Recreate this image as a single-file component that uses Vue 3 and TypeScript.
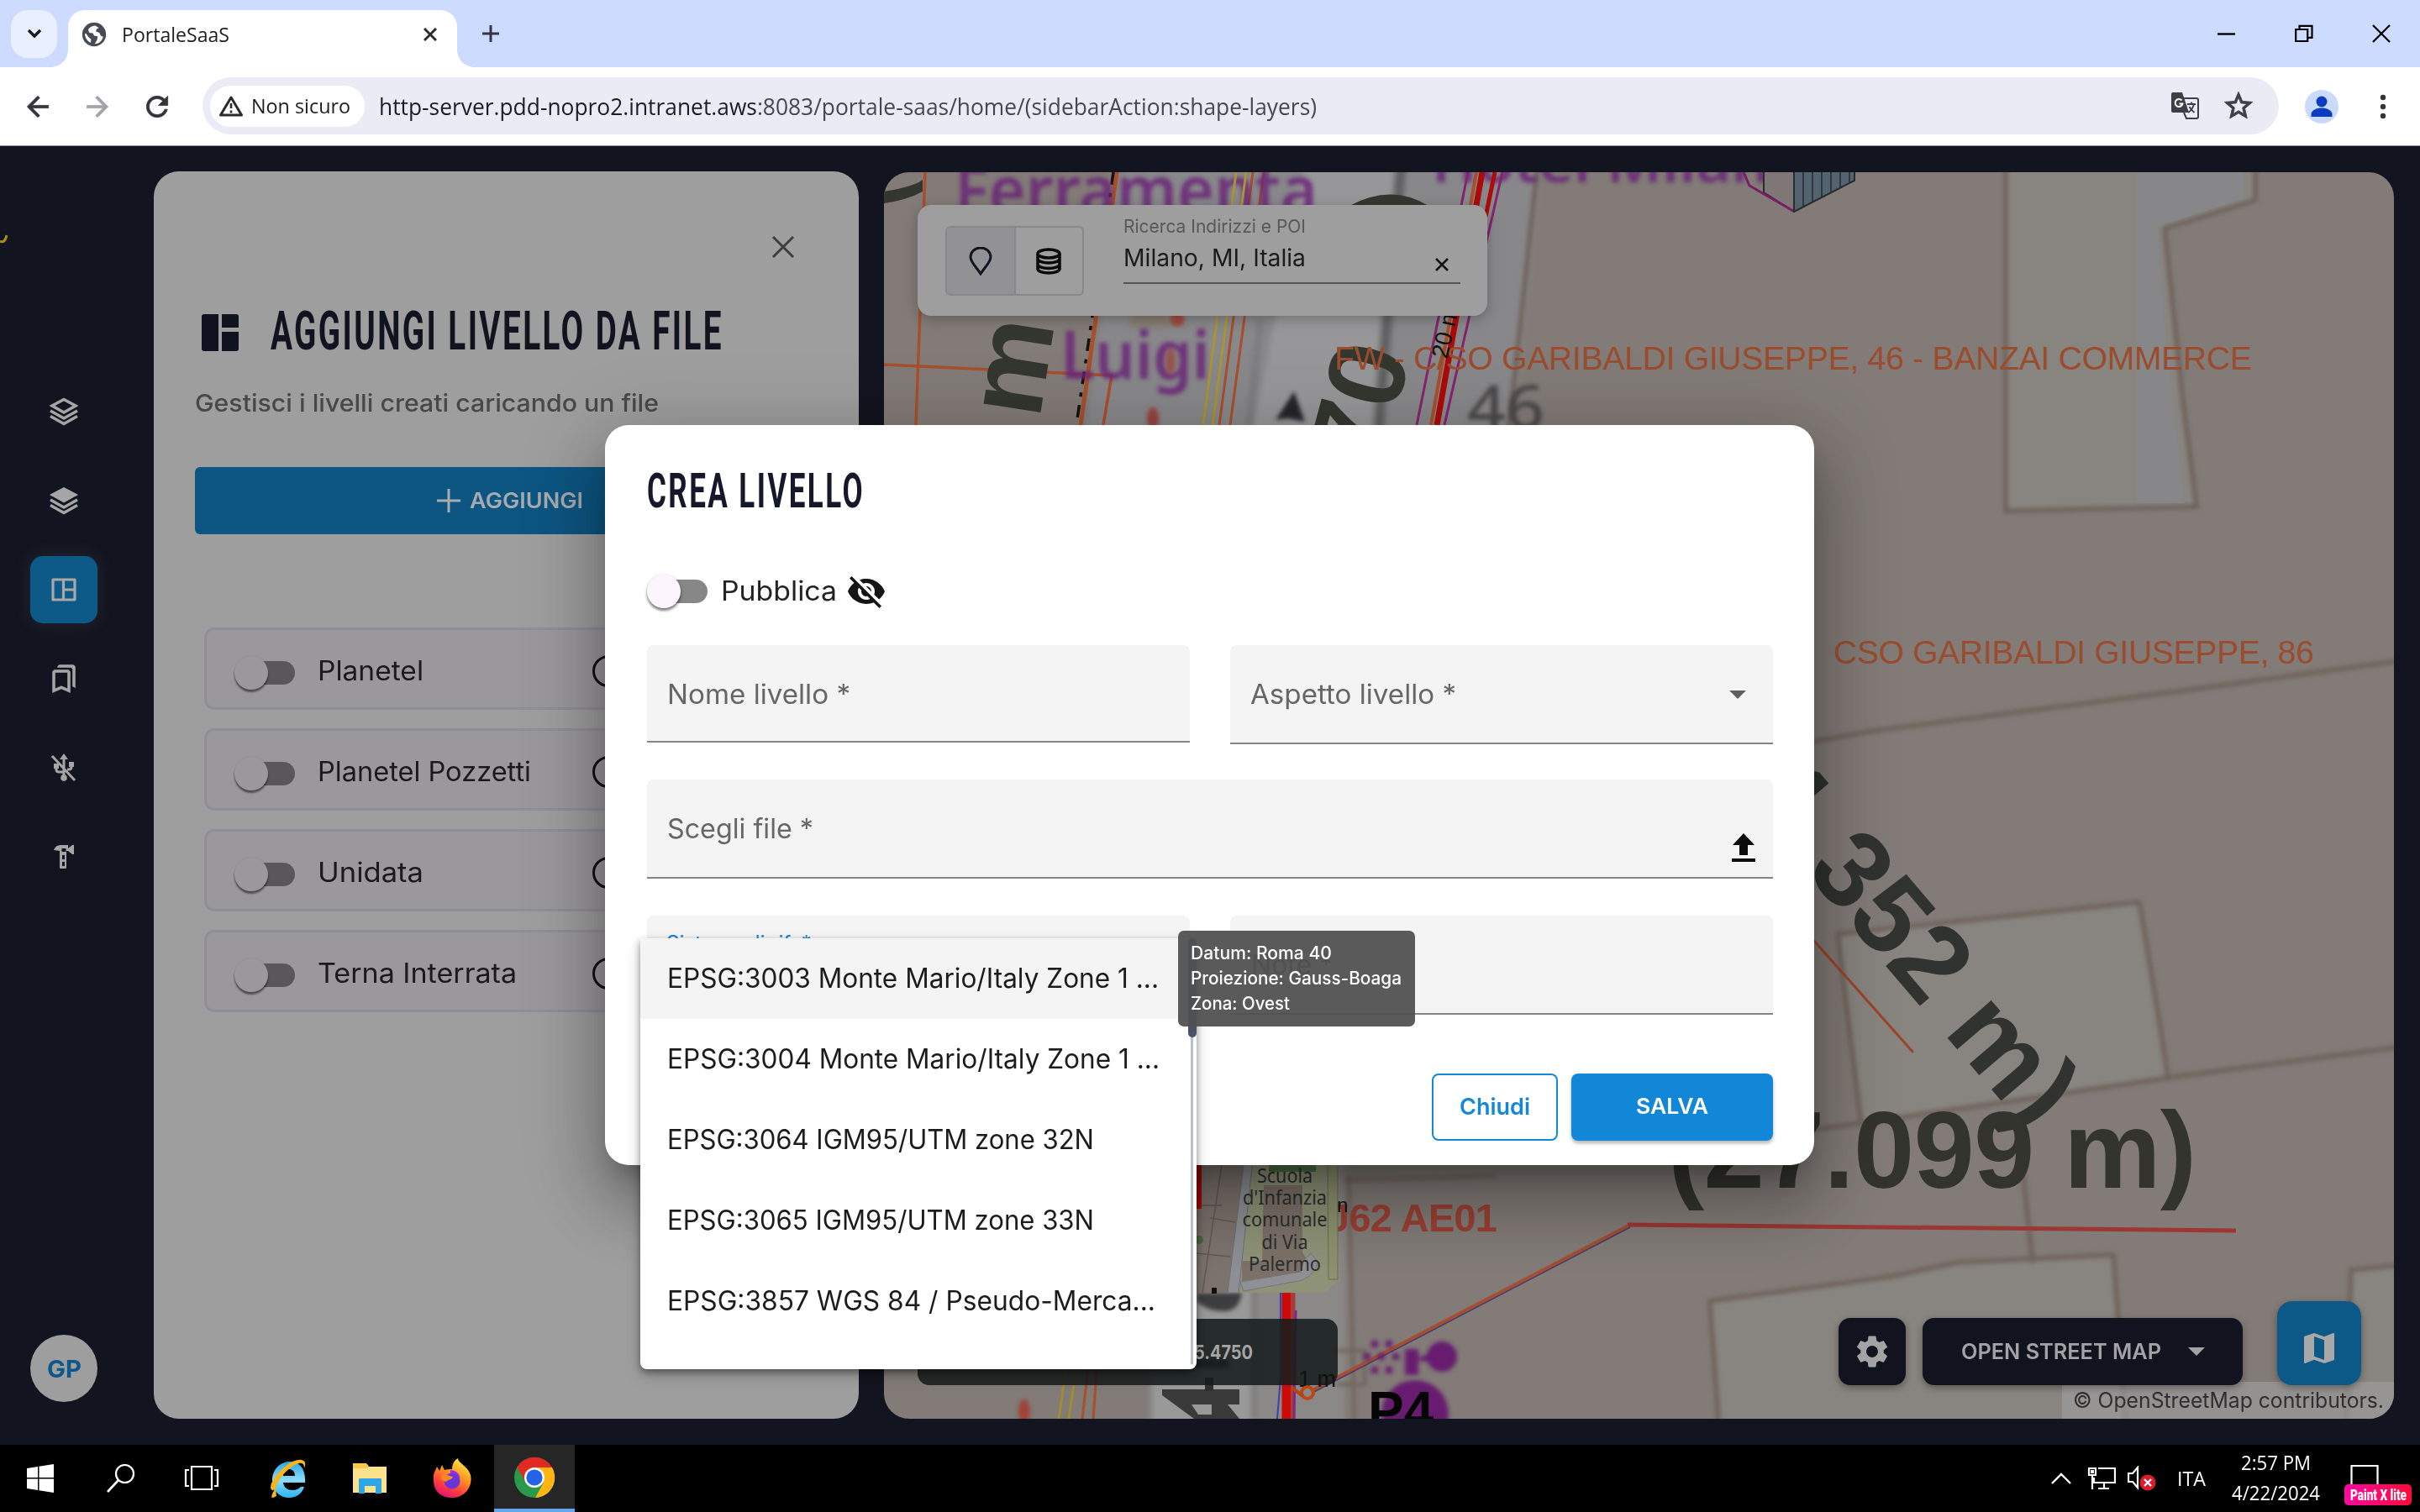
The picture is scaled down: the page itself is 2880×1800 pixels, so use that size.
<script setup lang="ts">
interface LayerRow {
  name: string
  width: number
}
interface EpsgOption {
  label: string
  width: number
}

const layers: LayerRow[] = [
  { name: 'Planetel', width: 126 },
  { name: 'Planetel Pozzetti', width: 254 },
  { name: 'Unidata', width: 126 },
  { name: 'Terna Interrata', width: 237 },
]

const options: EpsgOption[] = [
  { label: 'EPSG:3003 Monte Mario/Italy Zone 1 ...', width: 585 },
  { label: 'EPSG:3004 Monte Mario/Italy Zone 1 ...', width: 586 },
  { label: 'EPSG:3064 IGM95/UTM zone 32N', width: 508 },
  { label: 'EPSG:3065 IGM95/UTM zone 33N', width: 508 },
  { label: 'EPSG:3857 WGS 84 / Pseudo-Merca...', width: 581 },
]

// Stretches a line of text to an exact width while keeping its flow size in step.
const vFit = {
  mounted(el: HTMLElement, binding: { value: number }) {
    const natural = el.getBoundingClientRect().width
    if (!natural) return
    el.style.transform = `scaleX(${binding.value / natural})`
    el.style.marginRight = `${binding.value - natural}px`
  },
}
</script>

<template>
  <div class="screen">
    <!-- Tab strip -->
    <div class="tabs">
      <div class="tab-search">
        <svg width="18" height="12" viewBox="0 0 18 12"><path d="M2 2l7 7 7-7" fill="none" stroke="#1b1b1f" stroke-width="3.4" /></svg>
      </div>
      <div class="tab">
        <svg width="34" height="34" viewBox="0 0 24 24"><circle cx="12" cy="12" r="10" fill="#474b54" /><path fill="#fff" d="M13 4.500c-3 0-5 1.500-6 3.500l1 2.500 3 .5 1 2 3 .5-.5 3-2 3.500c4 0 6.500-3 7-6l-2-1-1-2.500-3-1 .5-2 2-1z M5 11l-.8 1c.3 3 2 5.500 4.800 7l.5-3-2-1.500z" /></svg>
        <span class="tab-title"><span v-fit="128" class="fit">PortaleSaaS</span></span>
        <svg class="tab-x" width="16" height="16" viewBox="0 0 16 16"><path d="M1 1l14 14M15 1L1 15" stroke="#2a2b30" stroke-width="3" /></svg>
      </div>
      <svg class="plus" width="22" height="22" viewBox="0 0 22 22"><path d="M11 1v20M1 11h20" stroke="#333740" stroke-width="3" /></svg>
      <div class="win">
        <svg width="22" height="22" viewBox="0 0 22 22"><path d="M0 11.5h21" stroke="#000" stroke-width="2.4" /></svg>
        <svg width="22" height="22" viewBox="0 0 22 22"><path d="M1.2 6h14v14h-14zM5.5 6V1.8h15v14h-5" fill="none" stroke="#000" stroke-width="2.2" /></svg>
        <svg width="22" height="22" viewBox="0 0 22 22"><path d="M1 1l20 20M21 1L1 21" stroke="#000" stroke-width="2.2" /></svg>
      </div>
    </div>

    <!-- Address bar -->
    <div class="toolbar">
      <div class="nav">
        <svg width="38" height="38" viewBox="0 0 24 24"><path fill="#33353b" stroke="#33353b" stroke-width=".5" d="M20 11H7.83l5.59-5.59L12 4l-8 8 8 8 1.41-1.41L7.83 13H20v-2z" /></svg>
        <svg width="38" height="38" viewBox="0 0 24 24"><path fill="#a3a4a8" stroke="#a3a4a8" stroke-width=".5" d="M12 4l-1.41 1.41L16.17 11H4v2h12.17l-5.58 5.59L12 20l8-8z" /></svg>
        <svg width="38" height="38" viewBox="0 0 24 24"><path fill="#33353b" stroke="#33353b" stroke-width=".5" d="M17.65 6.35C16.2 4.9 14.21 4 12 4c-4.42 0-7.99 3.58-7.99 8s3.57 8 7.99 8c3.73 0 6.84-2.55 7.73-6h-2.08c-.82 2.33-3.04 4-5.65 4-3.31 0-6-2.69-6-6s2.69-6 6-6c1.66 0 3.14.69 4.22 1.78L13 11h7V4l-2.35 2.35z" /></svg>
      </div>
      <div class="omnibox">
        <div class="chip">
          <svg width="30" height="26" viewBox="0 0 30 26"><path d="M15 3L2.5 24h25z" fill="none" stroke="#2a2b30" stroke-width="3" stroke-linejoin="round" /><path d="M15 10v6M15 18.5v3" stroke="#2a2b30" stroke-width="2.6" /></svg>
          <span v-fit="118" class="fit">Non sicuro</span>
        </div>
        <span class="url"><span v-fit="1116" class="fit"><b>http-server.pdd-nopro2.intranet.aws</b>:8083/portale-saas/home/(sidebarAction:shape-layers)</span></span>
        <svg class="translate" width="34" height="34" viewBox="0 0 34 34">
          <path d="M3 1h11l8 24H3q-2 0-2-2V3q0-2 2-2z" fill="#3c3f46" />
          <path d="M15 8h16q2 0 2 2v20q0 2-2 2H19l-3-7" fill="none" stroke="#3c3f46" stroke-width="2" />
          <path d="M13.500 10.500a4.500 4.500 0 1 0 1 4h-4" fill="none" stroke="#fff" stroke-width="2" />
          <path d="M20 15h10M25 12.500V15M28 15q-2 7-7 10M22.500 18q2 4 6 7" fill="none" stroke="#3c3f46" stroke-width="1.800" />
        </svg>
        <svg width="40" height="40" viewBox="0 0 24 24"><path fill="#3c3f46" stroke="#3c3f46" stroke-width=".5" d="M22 9.24l-7.19-.62L12 2 9.19 8.63 2 9.24l5.46 4.73L5.82 21 12 17.27 18.18 21l-1.63-7.03L22 9.24zM12 15.4l-3.76 2.27 1-4.28-3.32-2.88 4.38-.38L12 6.1l1.71 4.04 4.38.38-3.32 2.88 1 4.28L12 15.4z" /></svg>
      </div>
      <svg class="profile" width="40" height="40" viewBox="0 0 40 40"><circle cx="20" cy="20" r="20" fill="#c9dafd" /><circle cx="20" cy="14" r="6.500" fill="#0b3bbf" /><path d="M7.500 32v-3c0-5 7-7.500 12.500-7.500S32.500 24 32.500 29v3z" fill="#0b3bbf" /></svg>
      <svg class="dots" width="8" height="30" viewBox="0 0 8 30"><circle cx="4" cy="4" r="3.200" fill="#33353b" /><circle cx="4" cy="15" r="3.200" fill="#33353b" /><circle cx="4" cy="26" r="3.200" fill="#33353b" /></svg>
    </div>

    <!-- Application -->
    <div class="app">
      <aside class="rail">
        <svg class="scrap" width="9" height="12" viewBox="0 0 9 12"><path d="M0 8q6 3 8-7" fill="none" stroke="#b08d12" stroke-width="3" /></svg>
        <div class="rail-item"><svg width="36" height="34" viewBox="0 0 36 34"><path d="M18 2.500L32 10 18 18 4 10z" fill="none" stroke="#a5a5a5" stroke-width="3.500" /><path d="M2 16l16 9 16-9M2 22.500l16 9 16-9" fill="none" stroke="#a5a5a5" stroke-width="3.400" /></svg></div>
        <div class="rail-item"><svg width="36" height="34" viewBox="0 0 36 34"><path d="M18 1L35 10 18 19.500 1 10z" fill="#a5a5a5" /><path d="M2 16l16 9 16-9M2 22.500l16 9 16-9" fill="none" stroke="#a5a5a5" stroke-width="3.400" /></svg></div>
        <div class="rail-item active"><svg width="30" height="28" viewBox="0 0 30 28"><path d="M2 2h26v24H2zM14.500 2v24M14.500 14H28" fill="none" stroke="#a8a8a8" stroke-width="3.200" stroke-linejoin="round" /></svg></div>
        <div class="rail-item"><svg width="36" height="36" viewBox="0 0 24 24"><path fill="#a5a5a5" stroke="#a5a5a5" stroke-width=".4" d="M15 7v12.970l-4.210-1.810-.79-.34-.79.34L5 19.970V7h10m4-6H8.990C7.890 1 7 1.900 7 3h10c1.100 0 2 .9 2 2v13l2 1V3c0-1.100-.9-2-2-2zm-4 4H5c-1.100 0-2 .9-2 2v16l7-3 7 3V7c0-1.100-.9-2-2-2z" /></svg></div>
        <div class="rail-item"><svg width="32" height="34" viewBox="0 0 32 34"><g fill="none" stroke="#a5a5a5" stroke-width="3"><path d="M2 3l27 29M16 5v23M7 14v5q0 3 3 3h6M25 10v6q0 3-3 3h-2" /></g><path d="M16 0l5 7H11zM4 12h6v6H4zM22 10h6v6h-6z" fill="#a5a5a5" /><circle cx="16" cy="29" r="3.800" fill="#a5a5a5" /></svg></div>
        <div class="rail-item"><svg width="26" height="32" viewBox="0 0 26 32"><path d="M1 8q2-6 8-6h9v4l5-4h2v11h-2l-5-4h-2v20q0 1-1 1H9q-1 0-1-1V9z" fill="#a5a5a5" /><path d="M10.500 6h5v4h-5zM11 14h3v5h-3zM11 22h3v5h-3z" fill="#12151f" /></svg></div>
        <div class="avatar"><span v-fit="41" class="fit">GP</span></div>
      </aside>

      <section class="panel">
        <div class="panel-close"><svg width="28" height="28" viewBox="0 0 28 28"><path d="M2 2l24 24M26 2L2 26" stroke="#3d3d3f" stroke-width="3" /></svg></div>
        <div class="panel-head">
          <svg width="46" height="46" viewBox="0 0 46 46"><path d="M4 1h17v44H4q-3 0-3-3V4q0-3 3-3zM25 1h17q3 0 3 3v13H25zM25 22h20v20q0 3-3 3H25z" fill="#10131f" /></svg>
          <h1><span v-fit="539" class="fit">AGGIUNGI LIVELLO DA FILE</span></h1>
        </div>
        <p class="sub"><span v-fit="552" class="fit">Gestisci i livelli creati caricando un file</span></p>
        <div class="add">
          <svg width="28" height="28" viewBox="0 0 28 28"><path d="M14 0v28M0 14h28" stroke="#a8adb1" stroke-width="3" /></svg>
          <span v-fit="135" class="fit">AGGIUNGI</span>
        </div>
        <div class="cards">
          <div v-for="l in layers" :key="l.name" class="card">
            <span class="toggle dim"><i></i></span>
            <span class="card-name"><span v-fit="l.width" class="fit">{{ l.name }}</span></span>
            <span class="ring"></span>
          </div>
        </div>
      </section>

      <section class="map">
        <svg class="map-canvas" width="1797" height="1484" viewBox="1052 205 1797 1484">
          <defs>
            <filter id="soft" x="-20%" y="-20%" width="140%" height="140%"><feGaussianBlur stdDeviation="3.500" /></filter>
            <filter id="soft2" x="-20%" y="-20%" width="140%" height="140%"><feGaussianBlur stdDeviation="2.600" /></filter>
            <pattern id="hatch" width="11" height="20" patternUnits="userSpaceOnUse"><path d="M0 0v20" stroke="#1f2326" stroke-width="4" /></pattern>
          </defs>
          <rect x="1052" y="205" width="1797" height="1484" fill="#827b77" />
          <g filter="url(#soft)">
            <path d="M1335 190L1290 520H1800L1835 190z" fill="#88878a" />
            <path d="M1555 190L1490 520H1640L1668 190z" fill="#979799" />
            <path d="M1668 190L1658 300Q1650 380 1640 520" stroke="#5e5e5e" stroke-width="13" fill="none" />
            <path d="M1345 370h45v20h-45z" fill="#857b70" />
            <path d="M1500 380L1485 520" stroke="#777" stroke-width="6" fill="none" />
            <path d="M1370 1380V1700H1600V1380z" fill="#8b8888" />
            <path d="M1370 1380V1700H1490V1380z" fill="#999" />
            <path d="M1492 1530v160" stroke="#777" stroke-width="6" />
          </g>
          <g filter="url(#soft2)" fill="#88847f" stroke="#6f635c" stroke-width="6">
            <path d="M2387 195V608L2614 603 2598 480 2576 272 2684 238V195z" />
            <path d="M2187 1112L2330 1097 2546 1074 2567 1200 2580 1283 2215 1337z" />
            <path d="M2035 1549L2250 1520 2330 1503 2515 1494 2530 1700H2046z" />
            <path d="M2860 1506L2798 1512 2792 1700H2860z" />
            <path d="M1830 195L1795 520" fill="none" />
            <path d="M2150 884L2230 870 2600 822 2860 786" fill="none" />
            <path d="M2580 1283L2860 1246" fill="none" />
            <path d="M2215 1337L2150 1346" fill="none" />
            <path d="M2406 1380L2419 1504" fill="none" />
            <path d="M1605 1400L1612 1700M1600 1405L1780 1400" fill="none" stroke-width="4" />
            <path d="M1590 1608h34v40h-34" fill="none" stroke-width="4" />
          </g>
          <path d="M2543 205h127v32l-102 32 8 120 24 210h-57z" fill="#87888b" opacity=".7" />

          <g fill="none" stroke="#a84f2c" stroke-width="3">
            <path d="M1101 205L1090 506M1052 434L1323 447 1313 506" stroke-width="3.500" />
            <path d="M1329 205L1286 506" stroke-width="5" />
            <path d="M1491 205L1451 506M1504 205L1464 506" />
            <path d="M1757 205L1703 506" stroke-width="4" />
          </g>
          <path d="M1325 205L1281 506" stroke="#15120f" stroke-width="3.500" stroke-dasharray="15 10 5 10" fill="none" />

          <g class="osm" filter="url(#soft2)" fill="#6a2878" opacity=".85">
            <text x="1136" y="255" font-size="80" font-weight="600" textLength="432" lengthAdjust="spacingAndGlyphs">Ferramenta</text>
            <text x="1262" y="451" font-size="80" font-weight="600" textLength="178" lengthAdjust="spacingAndGlyphs">Luigi</text>
            <text x="1704" y="217" font-size="66" font-weight="600" textLength="446" lengthAdjust="spacingAndGlyphs">Hotel Milano</text>
          </g>
          <path d="M1471 205L1432 506M1483 205L1443 506" stroke="#a89433" stroke-width="3" fill="none" />
          <path d="M1747 205L1686 506M1788 205L1719 506" stroke="#84246f" stroke-width="3" fill="none" />
          <path d="M1764 205L1710 506" stroke="#ad0a0a" stroke-width="7" fill="none" />
          <path d="M1779 205L1768 258" stroke="#ad0a0a" stroke-width="5" fill="none" />
          <g filter="url(#soft2)">
            <circle cx="1401" cy="380" r="9" fill="#9b4a3f" /><ellipse cx="1393" cy="430" rx="6" ry="16" fill="#95524d" /><ellipse cx="1372" cy="498" rx="7" ry="13" fill="#95433d" />
            <path d="M1540 466L1553 502 1532 498 1518 500z" fill="#26272a" />
            <text x="1746" y="511" class="osm" font-size="72" font-weight="500" fill="#4b4a4a" textLength="92" lengthAdjust="spacingAndGlyphs">46</text>
          </g>
          <g class="arial" font-weight="700" fill="#34372f">
            <text transform="translate(1237 500) rotate(-81)" font-size="130">m</text>
            <text transform="translate(1642 562) rotate(-75)" font-size="130">70</text>
            <path d="M1052 228Q1088 222 1098 214V228Q1080 238 1052 242z" />
            <path d="M1606 245Q1656 218 1700 245z" />
          </g>
          <g class="arial" fill="#9a4d2e" font-size="39">
            <text x="1588" y="440" textLength="1092">FW - C/SO GARIBALDI GIUSEPPE, 46 - BANZAI COMMERCE</text>
            <text x="2182" y="790" textLength="572">CSO GARIBALDI GIUSEPPE, 86</text>
          </g>
          <text transform="translate(1722 428) rotate(-77)" class="arial" font-size="28" fill="#111">20 m</text>

          <path d="M2099 205v22l36 25 36-20V205z" fill="#7f7776" />
          <path d="M2135 205h72v10l-72 37z" fill="#536370" />
          <path d="M2135 205h72v10l-72 37z" fill="url(#hatch)" opacity=".65" />
          <path d="M2099 205v24l36 23 72-37v-10M2135 205v47" stroke="#2a2b2b" stroke-width="2" fill="none" />
          <path d="M2075 205l7 16 52 30" stroke="#7a1f63" stroke-width="3" fill="none" />

          <path d="M2150 1110L2277 1253" stroke="#9c4528" stroke-width="3" />
          <text transform="translate(2077 954) rotate(49.5)" class="arial" font-size="130" font-weight="700" fill="#30332f">1.352 m)</text>
          <text x="1985" y="1414" class="arial" font-size="130" font-weight="700" fill="#34342e" textLength="629">(27.099 m)</text>
          <path d="M1937 1458L2661 1465" stroke="#9c3733" stroke-width="5" />
          <path d="M1560 1656L1938 1459" stroke="#a34f30" stroke-width="4" />
          <path d="M1562 1658L1940 1461" stroke="#4b3a6e" stroke-width="1.500" />
          <text x="1580" y="1466" class="arial" font-size="47" font-weight="700" fill="#9a4034" textLength="202">J62 AE01</text>

          <g fill="none">
            <path d="M1270 1620L1260 1689M1282 1620L1272 1689" stroke="#a08c31" stroke-width="3" />
            <path d="M1296 1620L1288 1689M1306 1620L1301 1689" stroke="#a84f2c" stroke-width="3" />
            <path d="M1524 1530V1640L1520 1689" stroke="#3b3faf" stroke-width="2" />
            <path d="M1531 1530V1689" stroke="#cc0a08" stroke-width="11" />
            <path d="M1539 1530V1689" stroke="#a83c3c" stroke-width="5" />
            <path d="M1542 1560L1540 1689" stroke="#7a2a86" stroke-width="3" />
          </g>
          <g filter="url(#soft2)">
            <ellipse cx="1219" cy="1680" rx="7" ry="14" fill="#a04238" />
            <path d="M1424 1539h54q-3 22-22 22-20 0-32-12z" fill="#3d3d3f" />
            <path d="M1418 1618h44v10h-44z" fill="#2c2c2e" />
          </g>
          <path d="M1383 1654h92v18h-14l14 17h-54l-38-28z" fill="#3a3a3a" />
          <path d="M1418 1672h24v12h-16z" fill="#999" />
          <path d="M1434 1640h10v16h-10z" fill="#2f2f31" />
          <g filter="url(#soft2)" fill="#681a70">
            <path d="M1672 1606h16v10l10-3h8v8h-8l-10-2v18h-16z" /><circle cx="1716" cy="1615" r="18" /><circle cx="1684" cy="1683" r="40" />
            <circle cx="1636" cy="1600" r="4.500" /><circle cx="1653" cy="1600" r="4.500" /><circle cx="1627" cy="1615" r="4.500" /><circle cx="1644" cy="1615" r="4.500" /><circle cx="1661" cy="1615" r="4.500" /><circle cx="1636" cy="1631" r="4.500" /><circle cx="1653" cy="1631" r="4.500" />
          </g>
          <text x="1628" y="1702" class="arial" font-size="64" font-weight="700" fill="#050505">P4</text>

          <!-- Overview inset -->
          <path d="M1300 1350h292v174l-12 12q-3 3-8 3H1300z" fill="#8e9277" />
          <path d="M1400 1380h84l-22 159h-62z" fill="#7c736e" />
          <path d="M1455 1380L1431 1539M1424 1435h30M1424 1492l40 4M1440 1450l30 5" stroke="#615a55" stroke-width="1.500" fill="none" />
          <path d="M1481 1380h10l-17 159h-13z" fill="#8d8f94" stroke="#6e7076" />
          <path d="M1504 1411h46v80l14 22-86 12v-24h24z" fill="#7c7169" />
          <path d="M1580 1385h12v138h-11z" fill="#8c926e" stroke="#6b7050" />
          <path d="M1480 1537l70-13q16-8 18-22l-8-10-8 8-4 14-72 12z" fill="#8f9096" stroke="#75757a" />
          <path d="M1424 1387h6v52h-6z" fill="#ad0a0a" />
          <path d="M1510 1387h56v8h-56z" fill="#4e6f42" />
          <circle cx="1427" cy="1476" r="5" fill="#4c6b43" />
          <rect x="1442" y="1533" width="6" height="7" fill="#111" />
          <g class="noto" font-size="23" fill="#2d2f2d" text-anchor="middle">
            <text x="1529" y="1408" textLength="66" lengthAdjust="spacingAndGlyphs">Scuola</text>
            <text x="1529" y="1434" textLength="100" lengthAdjust="spacingAndGlyphs">d'Infanzia</text>
            <text x="1529" y="1460" textLength="101" lengthAdjust="spacingAndGlyphs">comunale</text>
            <text x="1529" y="1487" textLength="55" lengthAdjust="spacingAndGlyphs">di Via</text>
            <text x="1529" y="1513" textLength="86" lengthAdjust="spacingAndGlyphs">Palermo</text>
          </g>
          <text x="1591" y="1443" class="arial" font-size="24" fill="#111">n</text>
          <rect x="1092" y="1570" width="500" height="79" rx="14" fill="#161b1c" opacity=".87" />
          <text x="1421" y="1618" class="inter" font-size="23" font-weight="700" fill="#a5a5a5" textLength="70" lengthAdjust="spacingAndGlyphs">5.4750</text>
          <text x="1545" y="1651" class="arial" font-size="27" fill="#111">1 m</text>
          <circle cx="1556" cy="1658" r="7" fill="none" stroke="#bd4812" stroke-width="4" />
          <path d="M1537 1652l14 10" stroke="#b34218" stroke-width="4" />
        </svg>

        <div class="search">
          <div class="modes">
            <span class="on"><svg width="28" height="34" viewBox="0 0 28 34"><path d="M14 32C9 24 2 18 2 12a12 11 0 0 1 24 0c0 6-7 12-12 20z" fill="none" stroke="#12151f" stroke-width="3" /></svg></span>
            <span><svg width="32" height="32" viewBox="0 0 32 32"><g fill="none" stroke="#0a0a0a" stroke-width="3.600"><ellipse cx="16" cy="7" rx="13" ry="5" /><path d="M3 7v18c0 3 6 5 13 5s13-2 13-5V7M3 13c0 3 6 5 13 5s13-2 13-5M3 19.500c0 3 6 5 13 5s13-2 13-5" /></g></svg></span>
          </div>
          <div class="query">
            <span class="query-label"><span v-fit="217" class="fit">Ricerca Indirizzi e POI</span></span>
            <span class="query-value"><span v-fit="217" class="fit">Milano, MI, Italia</span>
              <svg width="16" height="16" viewBox="0 0 16 16"><path d="M1 1l14 14M15 1L1 15" stroke="#151515" stroke-width="2.500" /></svg></span>
          </div>
        </div>

        <div class="attribution"><span v-fit="370" class="fit">© OpenStreetMap contributors.</span></div>
        <div class="map-tools">
          <div class="gear"><svg width="46" height="46" viewBox="0 0 24 24"><path fill="#a3a3a5" d="M19.140 12.940c.04-.3.06-.61.06-.94 0-.32-.02-.64-.07-.94l2.030-1.580c.18-.14.23-.41.12-.61l-1.920-3.320c-.12-.22-.37-.29-.59-.22l-2.390.96c-.5-.38-1.030-.7-1.620-.94l-.36-2.540c-.04-.24-.24-.41-.48-.41h-3.840c-.24 0-.43.17-.47.41l-.36 2.540c-.59.24-1.130.57-1.620.94l-2.390-.96c-.22-.08-.47 0-.59.22L2.740 8.870c-.12.21-.08.47.12.61l2.030 1.580c-.05.3-.09.63-.09.94s.02.64.07.94l-2.030 1.580c-.18.14-.23.41-.12.61l1.920 3.320c.12.22.37.29.59.22l2.390-.96c.5.38 1.030.7 1.620.94l.36 2.540c.05.24.24.41.48.41h3.840c.24 0 .44-.17.47-.41l.36-2.540c.59-.24 1.130-.56 1.620-.94l2.390.96c.22.08.47 0 .59-.22l1.920-3.320c.12-.22.07-.47-.12-.61l-2.010-1.580zM12 15.600c-1.980 0-3.600-1.620-3.600-3.600s1.620-3.600 3.600-3.600 3.600 1.620 3.600 3.600-1.620 3.600-3.600 3.600z" /></svg></div>
          <div class="basemap"><span v-fit="238" class="fit">OPEN STREET MAP</span><svg width="20" height="10" viewBox="0 0 20 10"><path d="M0 0h20L10 10z" fill="#a3a3a5" /></svg></div>
          <div class="map-btn"><svg width="48" height="48" viewBox="0 0 24 24"><path fill="#a8a8a8" d="M20.500 3l-.16.03L15 5.100 9 3 3.360 4.900c-.21.07-.36.25-.36.48V20.500c0 .28.22.5.5.5l.16-.03L9 18.900l6 2.100 5.640-1.900c.21-.07.36-.25.36-.48V3.500c0-.28-.22-.5-.5-.5zM15 19l-6-2.110V5l6 2.110V19z" /></svg></div>
        </div>
      </section>

      <!-- Dialog -->
      <div class="dialog">
        <h2><span v-fit="259" class="fit">CREA LIVELLO</span></h2>
        <div class="publish">
          <span class="toggle"><i></i></span>
          <span class="publish-label"><span v-fit="138" class="fit">Pubblica</span></span>
          <svg width="48" height="48" viewBox="0 0 24 24"><path fill="#151515" d="M12 7c2.760 0 5 2.240 5 5 0 .65-.13 1.260-.36 1.830l2.920 2.920c1.510-1.260 2.700-2.890 3.430-4.750-1.730-4.390-6-7.500-11-7.500-1.400 0-2.740.25-3.980.7l2.160 2.160C10.740 7.130 11.350 7 12 7zM2 4.270l2.280 2.280.46.46C3.080 8.300 1.780 10.020 1 12c1.730 4.390 6 7.500 11 7.500 1.550 0 3.030-.3 4.380-.84l.42.42L19.730 22 21 20.730 3.270 3 2 4.270zM7.530 9.800l1.550 1.550c-.05.21-.08.43-.08.65 0 1.660 1.340 3 3 3 .22 0 .44-.03.65-.08l1.550 1.550c-.67.33-1.410.53-2.200.53-2.760 0-5-2.240-5-5 0-.79.2-1.530.53-2.200zm4.310-.78l3.150 3.150.02-.16c0-1.660-1.340-3-3-3l-.17.01z" /></svg>
        </div>
        <div class="row">
          <div class="field short"><span v-fit="218" class="fit">Nome livello *</span></div>
          <div class="field"><span v-fit="245" class="fit">Aspetto livello *</span><svg class="caret" width="20" height="10" viewBox="0 0 20 10"><path d="M0 0h20L10 10z" fill="#5f5f5f" /></svg></div>
        </div>
        <div class="row file">
          <div class="field"><span v-fit="174" class="fit">Scegli file *</span><svg class="upload" width="28" height="34" viewBox="0 0 28 34"><path d="M14 0l13 14h-8v12H9V14H1zM0 30h28v4H0z" fill="#0b0b0b" /></svg></div>
        </div>
        <div class="row third">
          <div class="field focus"><span class="float">Sistema di rif. *</span></div>
          <div class="field"><span class="note">Note *</span></div>
        </div>
        <div class="actions">
          <div class="btn ghost"><span v-fit="84" class="fit">Chiudi</span></div>
          <div class="btn solid"><span v-fit="86" class="fit">SALVA</span></div>
        </div>
      </div>

      <div class="listbox">
        <div v-for="(o, i) in options" :key="o.label" class="option" :class="{ hot: i === 0 }"><span v-fit="o.width" class="fit">{{ o.label }}</span></div>
        <div class="track"><div class="thumb"></div></div>
      </div>

      <div class="tooltip">
        <div><span v-fit="168" class="fit">Datum: Roma 40</span></div>
        <div><span v-fit="251" class="fit">Proiezione: Gauss-Boaga</span></div>
        <div><span v-fit="118" class="fit">Zona: Ovest</span></div>
      </div>
    </div>

    <!-- Windows taskbar -->
    <div class="taskbar">
      <div class="task"><svg width="34" height="34" viewBox="0 0 34 34"><path d="M1 5l13-2v13H1zM15.500 2.800L33 0v16H15.500zM1 17.500h13V31L1 29zM15.500 17.500H33V34l-17.500-2.700z" fill="#fff" /></svg></div>
      <div class="task"><svg width="34" height="34" viewBox="0 0 34 34"><circle cx="21.500" cy="11.500" r="10.500" fill="none" stroke="#fff" stroke-width="2.200" /><path d="M14 19L1 33" stroke="#fff" stroke-width="2.600" /></svg></div>
      <div class="task"><svg width="42" height="32" viewBox="0 0 42 32"><path d="M9 2h24v27H9zM6 6H2v19h4M36 6h4v19h-4" fill="none" stroke="#fff" stroke-width="2.200" /></svg></div>
      <div class="task">
        <svg width="48" height="48" viewBox="0 0 48 48">
          <defs><linearGradient id="ie" x1="0" y1="0" x2="0" y2="1"><stop offset="0" stop-color="#2ba3e8" /><stop offset=".5" stop-color="#8adcfb" /><stop offset="1" stop-color="#2bb3f2" /></linearGradient></defs>
          <path d="M45 29H19c1 6 5 9 11 9 5 0 8-2 10-4h4c-3 9-10 13-18 13-12 0-20-9-20-21S15 4 27 4s19 9 18 25zM19 21h14c0-5-3-8-7-8s-7 3-7 8z" fill="url(#ie)" />
          <path d="M10 35C4 45 3 50 11 45M9 37C3 41 2 32 9 23 17 11 32 0 41 2c5 1 5 5 3 10 0-5-2-7-6-6C28 9 15 21 11 33c-3 6-4 11-1 12" fill="#f3b61c" />
        </svg>
      </div>
      <div class="task"><svg width="42" height="38" viewBox="0 0 42 38"><path d="M1 2h17l2 3h21v31H1z" fill="#fce28a" /><path d="M1 1h16l2 4v2H1z" fill="#f7c948" /><path d="M8 20q0-1 1-1h25q1 0 1 1v17h-7V28H15v9H8z" fill="#2ea7e8" /></svg></div>
      <div class="task">
        <svg width="48" height="48" viewBox="0 0 48 48">
          <defs><linearGradient id="fox" x1=".8" y1="0" x2=".3" y2="1"><stop offset="0" stop-color="#fff04a" /><stop offset=".4" stop-color="#ff9a1f" /><stop offset=".75" stop-color="#ff3c3c" /><stop offset="1" stop-color="#e0107a" /></linearGradient></defs>
          <path d="M2 26C1 19 4 15 6 10l3 5 3-7 3 6c3-1 7-1 9-1 0-6 3-11 7-13 0 6 12 9 15 20 3 14-7 27-22 27S2 38 2 26z" fill="url(#fox)" />
          <circle cx="24" cy="27" r="9.500" fill="#6a35d8" /><path d="M11 21c6-3 9 0 14 1-1 4-6 3-8 6-4-1-6-3-6-7z" fill="#ff8a1a" /><path d="M22 14q9 0 12 10-5-6-12-5z" fill="#9a2af0" />
        </svg>
      </div>
      <div class="task current">
        <svg width="50" height="50" viewBox="0 0 50 50">
          <circle cx="25" cy="25" r="24" fill="#2a9a4a" />
          <path d="M25 13H46A24 24 0 0 1 26 49L36 31z" fill="#fcb514" />
          <path d="M4.200 13A24 24 0 0 1 46 13H25L15 31z" fill="#e02a22" />
          <circle cx="25" cy="25" r="12" fill="#fff" /><circle cx="25" cy="25" r="9.600" fill="#2563e6" />
        </svg>
      </div>
      <div class="tray">
        <svg width="24" height="14" viewBox="0 0 24 14"><path d="M1 13L12 2l11 11" fill="none" stroke="#fff" stroke-width="2.400" /></svg>
        <svg class="net" width="34" height="28" viewBox="0 0 34 28"><path d="M13 2h20v17H8v-6M2 2h8v8H2zM6 10v17M13 26h13M20 19v7" fill="none" stroke="#fff" stroke-width="2.200" /><path d="M4 4h4v4H4z" fill="#fff" /></svg>
        <svg class="vol" width="34" height="30" viewBox="0 0 34 30"><path d="M1 9h5l6-7v24l-6-7H1z" fill="none" stroke="#fff" stroke-width="2.200" /><circle cx="24" cy="20" r="9.500" fill="#d81e2c" /><path d="M20 16l8 8M28 16l-8 8" stroke="#fff" stroke-width="2.400" /></svg>
        <span class="lang"><span v-fit="34" class="fit">ITA</span></span>
        <div class="clock"><div><span v-fit="83" class="fit">2:57 PM</span></div><div><span v-fit="105" class="fit">4/22/2024</span></div></div>
        <svg class="notif" width="34" height="34" viewBox="0 0 34 34"><path d="M1.500 2h31v26h-31z" fill="none" stroke="#fff" stroke-width="2.200" /></svg>
      </div>
      <div class="badge"><span v-fit="67" class="fit">Paint X lite</span></div>
    </div>
  </div>
</template>

<style>
html,
body {
  margin: 0;
  background: #000;
}
</style>

<style scoped>
.screen {
  width: 2880px;
  height: 1800px;
  overflow: hidden;
  display: flex;
  flex-direction: column;
  font-family: Inter, 'Open Sans', sans-serif;
  line-height: 1;
}
.screen * { box-sizing: border-box; }
svg { flex: none; display: block; }
.fit {
  display: inline-block;
  white-space: pre;
  transform-origin: 0 50%;
  flex: none;
}
.osm, .noto { font-family: 'Noto Sans', sans-serif; }
.arial { font-family: 'Liberation Sans', Arial, sans-serif; }
.inter { font-family: Inter, sans-serif; }

/* browser chrome */
.tabs {
  height: 80px;
  background: #ccdbff;
  display: flex;
  align-items: center;
  padding-left: 13px;
  font-family: 'Open Sans', 'Noto Sans', sans-serif;
}
.tab-search {
  width: 55px;
  height: 57px;
  border-radius: 20px;
  background: #e9effe;
  display: flex;
  align-items: center;
  justify-content: center;
}
.tab {
  position: relative;
  margin-left: 13px;
  width: 463px;
  height: 68px;
  align-self: flex-end;
  background: #fff;
  border-radius: 20px 20px 0 0;
  display: flex;
  align-items: center;
  padding: 0 24px 11px 14px;
}
.tab::before,
.tab::after {
  content: '';
  position: absolute;
  bottom: 0;
  width: 20px;
  height: 20px;
}
.tab::before { left: -20px; background: radial-gradient(circle at 0 0, transparent 19.5px, #fff 20px); }
.tab::after { right: -20px; background: radial-gradient(circle at 100% 0, transparent 19.5px, #fff 20px); }
.tab-title { margin-left: 16px; padding-top: 2px; font-size: 23px; color: #1d1d20; flex: 1; }
.plus { margin-left: 29px; }
.win { margin-left: auto; display: flex; gap: 70px; padding-right: 35px; }
.toolbar {
  height: 94px;
  display: flex;
  align-items: center;
  background: #fff;
  border-bottom: 1px solid #8f8f94;
  padding-left: 26px;
  font-family: 'Open Sans', 'Noto Sans', sans-serif;
}
.nav { display: flex; gap: 33px; width: 215px; }
.omnibox {
  width: 2471px;
  height: 68px;
  margin-top: -1px;
  border-radius: 34px;
  background: #ebebf5;
  display: flex;
  align-items: center;
  padding: 0 28px 0 9px;
}
.chip {
  width: 184px;
  height: 49px;
  border-radius: 24px;
  background: #fff;
  display: flex;
  align-items: center;
  gap: 9px;
  padding-left: 10px;
  font-size: 23px;
  color: #1d1d20;
}
.url { margin-left: 17px; flex: 1; font-size: 27px; color: #47484f; }
.url b { font-weight: 400; color: #1c1d22; }
.translate { margin-right: 27px; }
.profile { margin-left: 31px; }
.dots { margin-left: 49px; }

/* app shell */
.app {
  position: relative;
  height: 1546px;
  background: #12151f;
  display: flex;
  padding: 31px 31px 31px 0;
}
.rail {
  position: relative;
  width: 183px;
  flex: none;
  padding: 245px 0 20px 36px;
  display: flex;
  flex-direction: column;
  gap: 26px;
}
.scrap { position: absolute; left: 0; top: 74px; }
.rail-item { width: 80px; height: 80px; display: flex; align-items: center; justify-content: center; }
.rail-item.active { background: #0d5a88; border-radius: 15px; box-shadow: 0 0 22px rgba(150, 150, 190, 0.14); }
.avatar {
  width: 80px;
  height: 80px;
  margin-top: auto;
  border-radius: 50%;
  background: #9e9e9e;
  display: flex;
  align-items: center;
  justify-content: center;
  font-size: 29px;
  font-weight: 700;
  color: #0c5888;
}
.panel {
  width: 839px;
  flex: none;
  margin-top: -1px;
  border-radius: 30px;
  background: #9e9e9e;
  padding: 76px 40px 0 49px;
}
.panel-close { display: flex; justify-content: flex-end; padding-right: 36px; height: 28px; }
.panel-head { margin-top: 56px; height: 64px; display: flex; align-items: center; padding-left: 7px; gap: 37px; }
h1, h2 { margin: 0; font-family: Roboto, sans-serif; font-weight: 700; line-height: 64px; }
h1 { font-size: 64px; letter-spacing: 4px; color: #11131f; margin-top: -2px; }
.sub { margin: 30px 0 0; height: 44px; line-height: 44px; font-size: 29px; font-weight: 500; color: #48484a; }
.add {
  margin-top: 54px;
  height: 80px;
  border-radius: 6px;
  background: #0d5682;
  display: flex;
  align-items: center;
  justify-content: center;
  gap: 11px;
  font-size: 25px;
  font-weight: 600;
  color: #a5abb0;
}
.cards { margin: 111px 12px 0 11px; display: flex; flex-direction: column; gap: 22px; }
.card {
  height: 98px;
  border: 3px solid #918e9c;
  border-radius: 12px;
  background: #9b989b;
  display: flex;
  align-items: center;
  padding: 10px 0 0 33px;
}
.toggle { display: flex; align-items: center; width: 72px; height: 28px; border-radius: 14px; background: linear-gradient(90deg, transparent 14px, #878787 14px); }
.toggle i { width: 40px; height: 40px; flex: none; border-radius: 50%; background: #fdf5fd; box-shadow: 0 3px 3px rgba(0, 0, 0, 0.45), 0 1px 5px rgba(0, 0, 0, 0.15); }
.toggle.dim { background: linear-gradient(90deg, transparent 14px, #59575a 14px); }
.toggle.dim i { background: #9b989b; box-shadow: 0 3px 2px rgba(0, 0, 0, 0.45), 0 1px 3px rgba(0, 0, 0, 0.15); }
.card-name { margin-left: 27px; width: 327px; margin-top: -4px; font-size: 32px; color: #1a1a1a; }
.ring { width: 38px; height: 38px; border: 3px solid #111; border-radius: 50%; margin-top: -4px; }

/* map */
.map { position: relative; width: 1797px; height: 1484px; margin-left: 30px; border-radius: 30px; overflow: hidden; }
.map-canvas { position: absolute; inset: 0; }
.search {
  position: absolute;
  left: 40px;
  top: 39px;
  width: 678px;
  height: 132px;
  border-radius: 16px;
  background: #9e9e9e;
  box-shadow: 0 4px 16px rgba(0, 0, 0, 0.25);
  display: flex;
  padding: 25px 32px 0 33px;
}
.modes { width: 165px; height: 83px; border: 2px solid #87888a; border-radius: 6px; display: flex; overflow: hidden; }
.modes span { flex: 1; display: flex; align-items: center; justify-content: center; }
.modes .on { background: #929294; border-right: 2px solid #87888a; }
.query { margin-left: 47px; width: 401px; height: 69px; border-bottom: 2px solid #555; }
.query-label { display: block; margin-top: -12px; height: 24px; line-height: 24px; font-size: 22px; color: #58585a; }
.query-value { display: flex; align-items: center; justify-content: space-between; margin-top: 7px; height: 38px; padding-right: 14px; font-size: 28px; color: #1b1b1b; }
.query-value svg { transform: translateY(8px); }
.attribution {
  position: absolute;
  right: 0;
  bottom: 0;
  width: 395px;
  height: 44px;
  background: rgba(158, 158, 158, 0.65);
  padding-left: 13px;
  line-height: 44px;
  font-size: 25px;
  color: #2f2f31;
}
.map-tools {
  position: absolute;
  right: 39px;
  bottom: 40px;
  display: flex;
  align-items: flex-end;
  font-size: 25px;
  font-weight: 600;
  color: #a3a3a5;
}
.map-tools > div { display: flex; align-items: center; justify-content: center; box-shadow: 0 3px 8px rgba(0, 0, 0, 0.35); }
.gear { width: 80px; height: 80px; border-radius: 14px; background: #11131f; }
.basemap { width: 381px; height: 80px; margin-left: 20px; border-radius: 14px; background: #11131f; gap: 32px; }
.map-btn { width: 100px; height: 100px; margin-left: 41px; border-radius: 18px; background: #0c5988; padding-top: 12px; }

/* dialog */
.dialog {
  position: absolute;
  left: 720px;
  top: 332px;
  width: 1439px;
  height: 881px;
  border-radius: 28px;
  background: #fff;
  padding: 46px 49px 0 50px;
  box-shadow: 0 22px 30px -14px rgba(0, 0, 0, 0.28), 0 48px 76px 6px rgba(0, 0, 0, 0.2), 0 18px 92px 16px rgba(0, 0, 0, 0.16);
}
h2 { font-size: 58px; letter-spacing: 4px; color: #15172b; height: 64px; }
.publish { display: flex; align-items: center; height: 40px; margin-top: 68px; }
.publish-label { margin-left: 16px; width: 149px; font-size: 32px; color: #222; }
.row { display: flex; align-items: flex-start; gap: 48px; margin-top: 44px; height: 118px; }
.row.file { margin-top: 42px; }
.row.third { margin-top: 44px; }
.field {
  position: relative;
  flex: 1;
  height: 118px;
  border-radius: 8px 8px 0 0;
  background: #f4f4f4;
  border-bottom: 2px solid #858585;
  display: flex;
  align-items: center;
  padding: 2px 32px 0 24px;
  font-size: 32px;
  color: #666;
}
.field.short { height: 116px; padding-top: 4px; }
.caret { margin-left: auto; }
.upload { margin: 44px -11px 0 auto; }
.float { position: absolute; left: 23px; top: 21px; font-size: 24px; color: #1287d8; }
.note { padding-left: 1px; }
.actions { display: flex; justify-content: flex-end; gap: 16px; margin-top: 70px; }
.btn { height: 80px; border-radius: 8px; display: flex; align-items: center; justify-content: center; font-size: 27px; font-weight: 600; padding-bottom: 2px; }
.ghost { width: 150px; border: 2px solid #1488d8; color: #1488d8; }
.solid { width: 240px; background: #1287d8; color: #fff; font-size: 26px; box-shadow: 0 3px 4px rgba(0, 0, 0, 0.3); }

.listbox {
  position: absolute;
  left: 762px;
  top: 943px;
  width: 662px;
  height: 513px;
  border-radius: 0 0 8px 8px;
  background: #fff;
  box-shadow: 0 4px 8px rgba(0, 0, 0, 0.4), 0 8px 20px rgba(0, 0, 0, 0.15);
  overflow: hidden;
}
.option { height: 96px; display: flex; align-items: center; padding-left: 32px; font-size: 32px; color: #1c1c1c; }
.option.hot { background: #f4f4f4; }
.track { position: absolute; right: 0; top: 0; width: 10px; height: 507px; background: linear-gradient(90deg, transparent 3px, #b3c2ce 3px, #b3c2ce 6px, transparent 6px); }
.thumb { height: 118px; border-radius: 5px; background: #4a5068; }
.tooltip {
  position: absolute;
  left: 1402px;
  top: 934px;
  width: 282px;
  height: 114px;
  border-radius: 7px;
  background: rgba(80, 80, 80, 0.94);
  padding: 12px 15px;
  font-size: 21px;
  font-weight: 500;
  line-height: 30px;
  color: #fff;
}

/* taskbar */
.taskbar { position: relative; height: 80px; background: #000; display: flex; color: #fff; font-family: 'Open Sans', 'Noto Sans', sans-serif; }
.task { width: 96px; height: 80px; display: flex; align-items: center; justify-content: center; }
.task:nth-child(4) { margin-left: 6px; }
.task:nth-child(5), .task:nth-child(6) { margin-left: 2px; }
.task.current { margin-left: 2px; background: #262626; border-bottom: 4px solid #62a8f0; padding-top: 2px; }
.tray { margin-left: auto; display: flex; align-items: center; padding-right: 49px; }
.net { margin-left: 19px; }
.vol { margin-left: 14px; }
.lang { margin-left: 25px; font-size: 24px; width: 34px; }
.clock { margin-left: 30px; width: 107px; text-align: center; font-size: 23px; line-height: 36px; margin-top: -2px; }
.notif { margin-left: 35px; }
.badge {
  position: absolute;
  right: 10px;
  bottom: 8px;
  width: 80px;
  height: 25px;
  border-radius: 5px;
  background: linear-gradient(90deg, #ff08a0, #ff0a38);
  display: flex;
  align-items: center;
  justify-content: center;
  font-family: Roboto, sans-serif;
  font-weight: 900;
  font-size: 19px;
}
</style>
